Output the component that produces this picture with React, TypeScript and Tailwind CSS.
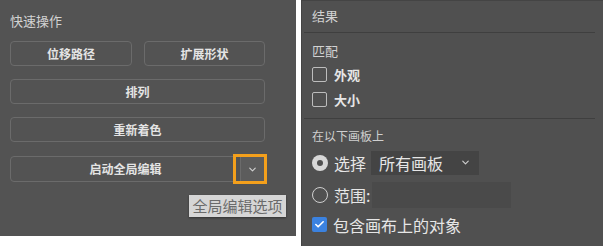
import React from "react";
import { ChevronDown, Check } from "lucide-react";

const font = { fontFamily: '"Noto Sans CJK SC", "Noto Sans", sans-serif' };

function QuickButton({ label, className = "" }: { label: string; className?: string }) {
    return (
        <div
            className={`h-[25px] rounded-[4px] border border-[#6b6b6b] bg-[#535353] flex items-center justify-center text-[12px] font-bold text-[#e4e4e4] ${className}`}
        >
            {label}
        </div>
    );
}

function Checkbox({ checked }: { checked?: boolean }) {
    if (checked) {
        return (
            <div className="w-[15px] h-[15px] rounded-[2px] bg-[#3b82e0] flex items-center justify-center">
                <Check className="w-[11px] h-[11px] text-white" strokeWidth={3.5} />
            </div>
        );
    }
    return <div className="w-[15px] h-[15px] rounded-[2px] border-[1.5px] border-[#bdbdbd]" />;
}

export default function App() {
    return (
        <div className="w-[604px] h-[246px] bg-white flex gap-[5px] overflow-hidden" style={font}>
            {/* left: quick actions */}
            <div className="relative w-[296px] h-[236px] bg-[#535353] pl-[10px] pr-[31px]">
                <p className="pt-[12px] h-[41px] text-[13px] text-[#d2d2d2] leading-[18px]">快速操作</p>
                <div className="flex flex-col gap-[13px]">
                    <div className="flex gap-[12px]">
                        <QuickButton label="位移路径" className="w-[122px]" />
                        <QuickButton label="扩展形状" className="w-[121px]" />
                    </div>
                    <QuickButton label="排列" />
                    <QuickButton label="重新着色" />
                </div>
                <div className="mt-[14px] h-[26px] flex rounded-[4px] border border-[#6b6b6b] text-[12px] font-bold text-[#e4e4e4]">
                    <div className="flex-1 flex items-center justify-center">启动全局编辑</div>
                    <div className="w-[24px] border-l border-[#6b6b6b] bg-[#5c5c5c] flex items-center justify-center">
                        <ChevronDown className="w-[11px] h-[11px] text-[#d0d0d0]" strokeWidth={2.5} />
                    </div>
                </div>

                {/* highlight box */}
                <div className="absolute left-[233px] top-[154px] w-[34px] h-[30px] border-[3px] border-[#f4a01c]" />

                {/* tooltip */}
                <div className="absolute left-[189px] top-[195px] w-[97px] h-[22px] bg-[#d6d6d6] shadow-[0_1px_2px_rgba(0,0,0,0.4)] flex items-center justify-center text-[15px] text-[#6b6b6b]">
                    全局编辑选项
                </div>
            </div>

            {/* right: results */}
            <div className="w-[302px] h-full bg-[#505050] border-l border-t border-[#444444] text-[#e6e6e6]">
                <p className="h-[31px] pl-[10px] pt-[6px] text-[13px] text-[#d2d2d2] leading-[18px]">结果</p>
                <div className="mx-[2px] mr-[8px] h-px bg-[#3f3f3f]" />
                <div className="pl-[10px]">
                    <p className="h-[29px] pt-[9px] text-[13px] text-[#d2d2d2] leading-[18px]">匹配</p>
                    <div className="h-[25px] flex items-center gap-[7px] text-[13px] font-bold">
                        <Checkbox />
                        <span>外观</span>
                    </div>
                    <div className="h-[25px] flex items-center gap-[7px] text-[13px] font-bold">
                        <Checkbox />
                        <span>大小</span>
                    </div>
                </div>
                <div className="mt-[6px] mx-[2px] mr-[8px] h-px bg-[#3f3f3f]" />
                <div className="pl-[10px]">
                    <p className="h-[30px] pt-[9px] text-[12px] text-[#cfcfcf] leading-[16px]">在以下画板上</p>
                    <div className="h-[27px] flex items-center text-[16px]">
                        <div className="w-[16px] h-[16px] rounded-full bg-[#d8d8d8] flex items-center justify-center">
                            <div className="w-[6px] h-[6px] rounded-full bg-[#505050]" />
                        </div>
                        <span className="ml-[6px]">选择</span>
                        <div className="ml-[5px] w-[108px] h-[24px] bg-[#444444] flex items-center justify-between pl-[8px] pr-[8px]">
                            <span>所有画板</span>
                            <ChevronDown className="w-[11px] h-[11px] text-[#cfcfcf]" strokeWidth={2.5} />
                        </div>
                    </div>
                    <div className="mt-[5px] h-[27px] flex items-center text-[16px]">
                        <div className="w-[16px] h-[16px] rounded-full border-[1.5px] border-[#cfcfcf]" />
                        <span className="ml-[6px]">范围:</span>
                        <div className="ml-[2px] w-[139px] h-[26px] bg-[#4a4a4a]" />
                    </div>
                    <div className="mt-[3px] h-[27px] flex items-center gap-[6px] text-[16px]">
                        <Checkbox checked />
                        <span>包含画布上的对象</span>
                    </div>
                </div>
            </div>
        </div>
    );
}
